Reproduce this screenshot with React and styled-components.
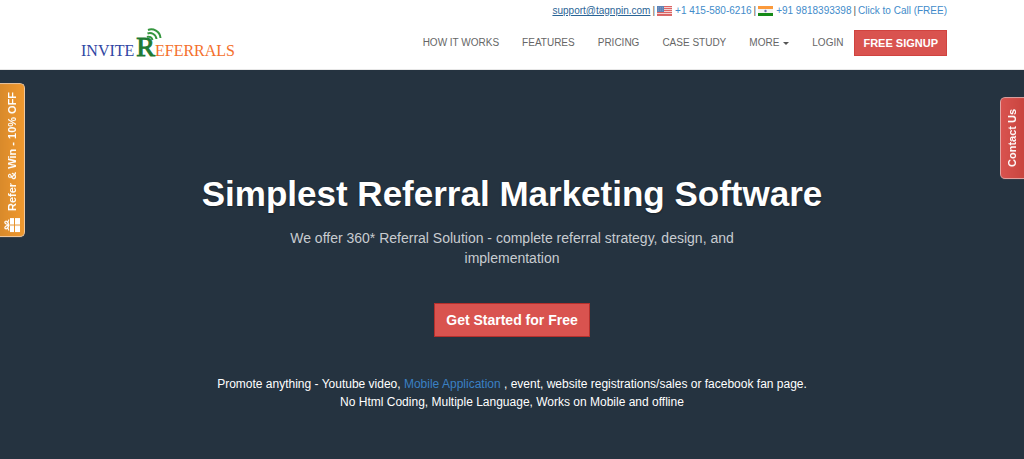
import React from "react";
import styled, { createGlobalStyle } from "styled-components";

const navItems = ["How it works", "Features", "Pricing", "Case study"];

export default function App() {
  return (
    <>
      <GlobalStyle />
      <Header>
        <Container>
          <TopBar>
            <SupportLink href="mailto:support@tagnpin.com">
              support@tagnpin.com
            </SupportLink>
            <Divider>|</Divider>
            <UsFlag />
            <TopLink href="tel:+14155806216">+1 415-580-6216</TopLink>
            <Divider>|</Divider>
            <IndiaFlag />
            <TopLink href="tel:+919818393398">+91 9818393398</TopLink>
            <Divider>|</Divider>
            <TopLink href="#call">Click to Call (FREE)</TopLink>
          </TopBar>
          <MainBar>
            <Logo href="#home">
              <LogoWord $color="#2f46a3">INVITE</LogoWord>
              <LogoLetter>
                R
                <Signal />
              </LogoLetter>
              <LogoWord $color="#f4702c">EFERRALS</LogoWord>
            </Logo>
            <Nav>
              {navItems.map((item) => (
                <NavLink key={item} href="#">
                  {item}
                </NavLink>
              ))}
              <NavLink href="#more">
                More
                <Caret />
              </NavLink>
              <NavLink href="#login">Login</NavLink>
              <SignupLink href="#signup">Free Signup</SignupLink>
            </Nav>
          </MainBar>
        </Container>
      </Header>
      <Hero>
        <Title>Simplest Referral Marketing Software</Title>
        <Subtitle>
          We offer 360* Referral Solution - complete referral strategy, design,
          and implementation
        </Subtitle>
        <StartButton type="button">Get Started for Free</StartButton>
        <Promo>
          Promote anything - Youtube video,{" "}
          <PromoLink href="#mobile">Mobile Application</PromoLink> , event,
          website registrations/sales or facebook fan page.
          <br />
          No Html Coding, Multiple Language, Works on Mobile and offline
        </Promo>
      </Hero>
      <ReferTab type="button">
        <Gift />
        Refer &amp; Win - 10% OFF
      </ReferTab>
      <ContactTab type="button">Contact Us</ContactTab>
    </>
  );
}

const UsFlag = () => (
  <Flag viewBox="0 0 15 10" aria-hidden="true">
    <rect width="15" height="10" fill="#f3d2d2" />
    {[0, 2, 4, 6, 8].map((y) => (
      <rect key={y} y={y} width="15" height="1" fill="#dc6464" />
    ))}
    <rect y="9" width="15" height="1" fill="#d86a6a" />
    <rect width="7" height="6" fill="#5f83b5" />
    <path
      d="M1 1.5h5M1 3h5M1 4.5h5"
      stroke="#86a3cb"
      strokeWidth="0.6"
      strokeDasharray="1 1"
    />
  </Flag>
);

const IndiaFlag = () => (
  <Flag viewBox="0 0 15 10" aria-hidden="true">
    <rect width="15" height="10" fill="#f4f4f4" />
    <rect width="15" height="3" fill="#fb9a3c" />
    <rect y="7" width="15" height="3" fill="#158a17" />
    <circle cx="7.5" cy="5" r="1.2" fill="#6c6cab" />
  </Flag>
);

const Signal = () => (
  <SignalIcon viewBox="0 0 18 14" aria-hidden="true">
    <g fill="none" stroke="#35963f" strokeWidth="2">
      <path d="M3 2C8 0 15 3 15.500 10" />
      <path d="M2.500 5.500C6.500 4 11 6.500 11.500 11" />
      <path d="M2 9C4.500 8 7 9.500 7.500 12" />
    </g>
  </SignalIcon>
);

// drawn lying on its side, the tab turns it round
const Gift = () => (
  <GiftIcon viewBox="0 0 16 14" aria-hidden="true">
    <g transform="translate(16 0) rotate(90)">
      <path d="M0 6h6.400v4H0zM7.600 6H14v4H7.600zM0 11h6.400v5H0zM7.600 11H14v5H7.600z" />
      <path
        d="M7 5C6 3.500 3 3.800 1.500 5M7 5C4 4 2.500 2.500 3.500 1.200S6.500 2 7 5M7 5c1-1.500 4-1.200 5.500 0M7 5c3-1 4.500-2.500 3.500-3.800S7.500 2 7 5"
        fill="none"
        stroke="#fff"
        strokeWidth="1.200"
      />
    </g>
  </GiftIcon>
);

const GlobalStyle = createGlobalStyle`
  * {
    box-sizing: border-box;
  }

  body {
    margin: 0;
    background: #253340;
    color: #555;
    font-family: "Liberation Sans", Arial, sans-serif;
    font-size: 10px;
  }

  a {
    text-decoration: none;
  }

  button {
    font-family: inherit;
    cursor: pointer;
  }
`;

const Header = styled.header`
  background: #fff;
  border-bottom: 1px solid #e7e7e7;
`;

const Container = styled.div`
  max-width: 870px;
  margin: 0 auto;
  padding: 4px 0 5px;
`;

const TopBar = styled.div`
  display: flex;
  justify-content: flex-end;
  align-items: center;
  line-height: 14px;
`;

const TopLink = styled.a`
  color: #428bca;
`;

const SupportLink = styled(TopLink)`
  color: #2a6496;
  text-decoration: underline;
`;

const Divider = styled.span`
  padding: 0 2px;
`;

const Flag = styled.svg`
  width: 15px;
  height: 10px;
  margin-right: 3px;
`;

const MainBar = styled.div`
  display: flex;
  justify-content: space-between;
  align-items: flex-start;
  padding-top: 12px;
`;

const Logo = styled.a`
  display: flex;
  align-items: baseline;
  padding: 4px 0 0 4px;
  font-family: "Liberation Serif", "Times New Roman", serif;
  line-height: 26px;
`;

const LogoWord = styled.span`
  font-size: 16px;
  color: ${({ $color }) => $color};
`;

const LogoLetter = styled.span`
  position: relative;
  padding-left: 2px;
  font-size: 28px;
  color: #1f7a34;
  -webkit-text-stroke: 1px #1f7a34;
`;

const SignalIcon = styled.svg`
  position: absolute;
  top: -6px;
  left: 11px;
  width: 18px;
  height: 14px;
`;

const Nav = styled.nav`
  display: flex;
  align-items: center;
  text-transform: uppercase;
`;

const NavLink = styled.a`
  display: flex;
  align-items: center;
  gap: 4px;
  padding: 0 11px 0 12px;
  line-height: 26px;
  color: #666;
`;

const Caret = styled.span`
  border: 3px solid transparent;
  border-top-color: #555;
  border-bottom: 0;
`;

const SignupLink = styled.a`
  padding: 0 8px;
  border: 1px solid #d0433f;
  background: #d9534f;
  color: #fff;
  font-size: 11px;
  font-weight: 700;
  line-height: 24px;
`;

const Hero = styled.main`
  display: flex;
  flex-direction: column;
  align-items: center;
  padding: 102px 40px 48px;
  text-align: center;
  color: #fff;
`;

const Title = styled.h1`
  margin: 0;
  font-size: 35px;
  line-height: 44px;
  text-shadow: 0 1px 2px rgba(0, 0, 0, 0.4);
`;

const Subtitle = styled.p`
  max-width: 500px;
  margin: 12px 0 35px;
  font-size: 14px;
  line-height: 20px;
  color: #c8ccd0;
`;

const StartButton = styled.button`
  padding: 0 11px;
  border: 1px solid #b5302c;
  background: #d9534f;
  color: #fff;
  font-size: 14px;
  font-weight: 700;
  line-height: 32px;
`;

const Promo = styled.p`
  margin: 38px 0 0;
  font-size: 12px;
  line-height: 18px;
`;

const PromoLink = styled.a`
  color: #3a80c4;
`;

const SideTab = styled.button`
  position: fixed;
  display: flex;
  align-items: center;
  writing-mode: vertical-rl;
  transform: rotate(180deg);
  border: 1px solid #f0c9a0;
  color: #fff;
  font-size: 11px;
  font-weight: 700;
`;

const ReferTab = styled(SideTab)`
  top: 83px;
  left: 0;
  gap: 7px;
  width: 25px;
  padding: 4px 4px 8px;
  border-right: 0;
  border-radius: 5px 0 0 5px;
  background: linear-gradient(to left, #d98a2b, #f0992f);
`;

const ContactTab = styled(SideTab)`
  top: 97px;
  right: 0;
  width: 24px;
  padding: 11px 5px;
  border-color: #e3a5a3;
  border-left: 0;
  border-radius: 0 5px 5px 0;
  background: linear-gradient(to right, #c9453f, #d9534f);
`;

const GiftIcon = styled.svg`
  width: 16px;
  height: 14px;
  fill: #fff;
`;
